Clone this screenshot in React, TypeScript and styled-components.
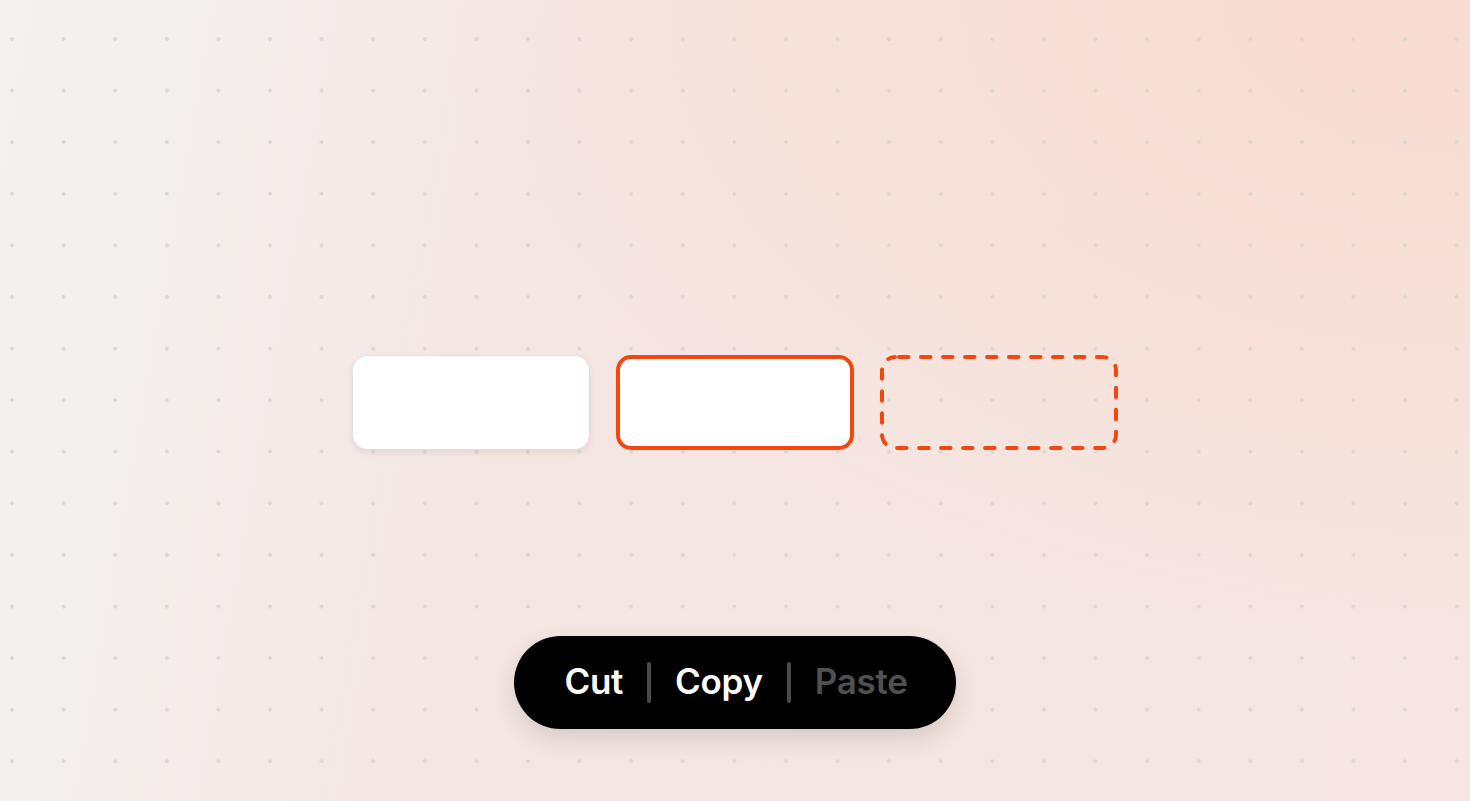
import React from "react";
import styled, { createGlobalStyle } from "styled-components";

const GlobalStyle = createGlobalStyle`
  html, body {
    margin: 0;
    padding: 0;
    height: 100%;
  }
  body {
    font-family: Inter, "Noto Sans", "Liberation Sans", sans-serif;
    -webkit-font-smoothing: antialiased;
  }
`;

const ACCENT = "#f4460f";

// dashed outline drawn as svg so dash length matches
const dashed = encodeURIComponent(
  `<svg xmlns="http://www.w3.org/2000/svg" width="238" height="95" viewBox="0 0 238 95"><rect x="2" y="2" width="234" height="91" rx="13" fill="none" stroke="${ACCENT}" stroke-width="4" stroke-linecap="round" stroke-dasharray="9.5 12.5" stroke-dashoffset="-4"/></svg>`
);

const Canvas = styled.div`
  position: relative;
  width: 100vw;
  height: 100vh;
  overflow: hidden;
  background:
    radial-gradient(circle at center, #dcd6d4 1.6px, transparent 2.1px) -13.8px 13.2px / 51.6px 51.6px,
    radial-gradient(ellipse 70% 80% at 100% 0%, rgba(249, 218, 206, 0.9) 0%, rgba(249, 218, 206, 0) 100%),
    linear-gradient(100deg, #f3f2f1 0%, #f3efed 12%, #f5e6e2 35%, #f6e5e1 100%);
  display: flex;
  flex-direction: column;
  align-items: center;
  padding-top: 355px;
  box-sizing: border-box;
`;

const Row = styled.div`
  display: flex;
  gap: 26px;
`;

const Slot = styled.div<{ $variant: "plain" | "selected" | "drop" }>`
  width: 238px;
  height: 95px;
  box-sizing: border-box;
  border-radius: 15px;
  ${({ $variant }) =>
    $variant === "plain"
      ? `
    background: #ffffff;
    border: 1.5px solid #e2dfde;
    box-shadow: 0 3px 7px rgba(0, 0, 0, 0.07);
  `
      : $variant === "selected"
      ? `
    background: #ffffff;
    border: 4px solid ${ACCENT};
  `
      : `
    background: url("data:image/svg+xml,${dashed}") no-repeat center / 100% 100%;
  `}
`;

const Menu = styled.div`
  margin-top: 186px;
  height: 93px;
  padding: 0 48px 0 50px;
  box-sizing: border-box;
  display: flex;
  align-items: center;
  gap: 24px;
  background: #000;
  border-radius: 47px;
  box-shadow: 0 10px 24px rgba(0, 0, 0, 0.12);
`;

const Item = styled.span<{ $disabled?: boolean }>`
  font-size: 35px;
  font-weight: 600;
  letter-spacing: -0.3px;
  color: ${({ $disabled }) => ($disabled ? "#505050" : "#ffffff")};
  line-height: 1;
  padding-bottom: 2px;
`;

const Divider = styled.span`
  width: 4px;
  height: 41px;
  border-radius: 2px;
  background: #4a4a4a;
`;

export default function App() {
  return (
    <>
      <GlobalStyle />
      <Canvas>
        <Row>
          <Slot $variant="plain" />
          <Slot $variant="selected" />
          <Slot $variant="drop" />
        </Row>
        <Menu>
          <Item>Cut</Item>
          <Divider />
          <Item>Copy</Item>
          <Divider />
          <Item $disabled>Paste</Item>
        </Menu>
      </Canvas>
    </>
  );
}
